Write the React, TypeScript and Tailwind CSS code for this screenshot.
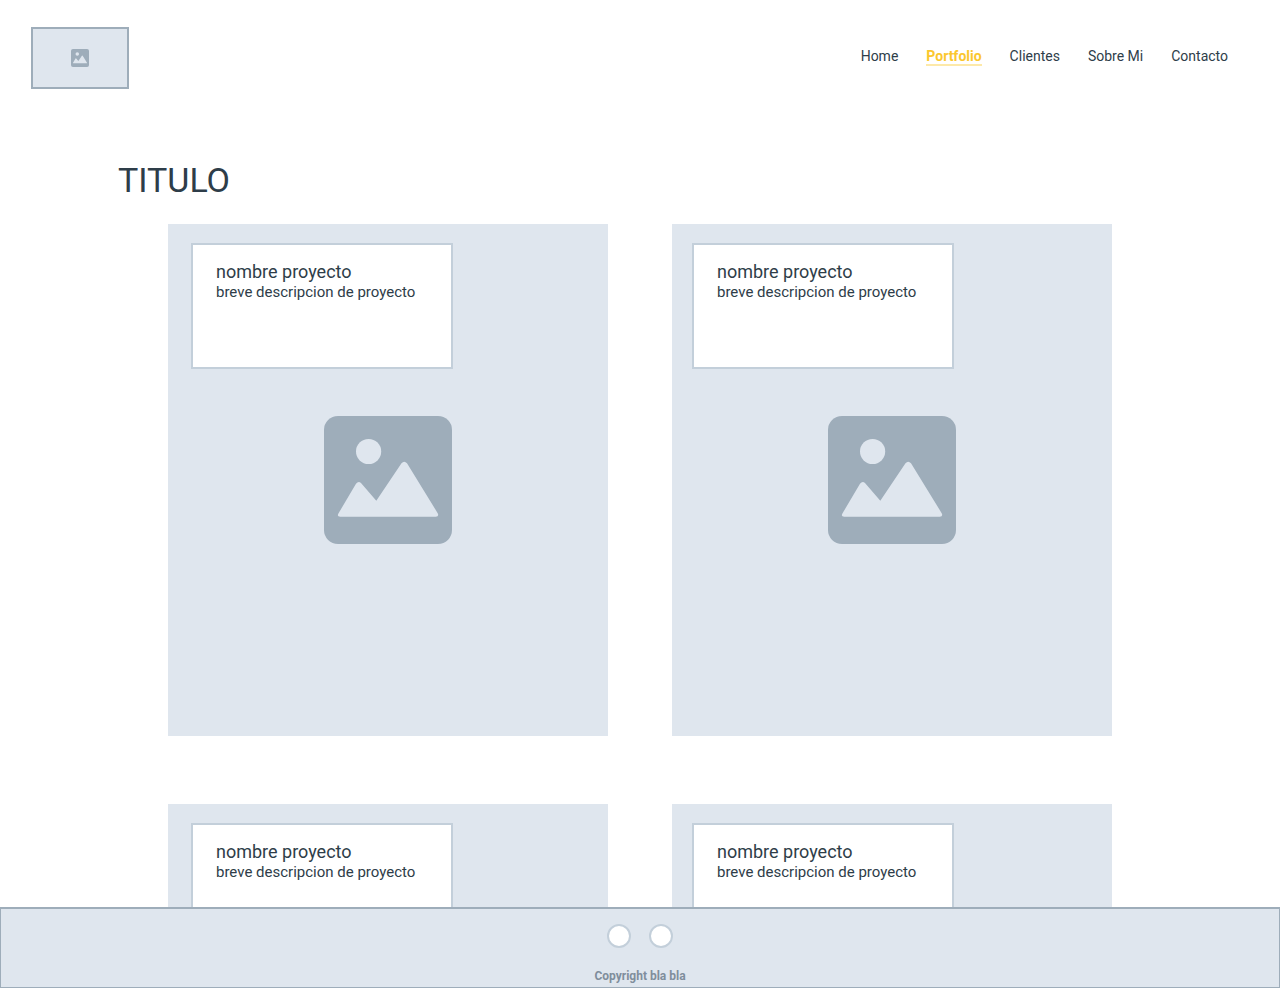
import React from "react";

const links = ["Home", "Portfolio", "Clientes", "Sobre Mi", "Contacto"];

const projects = [1, 2, 3, 4].map((id) => ({
  id,
  name: "nombre proyecto",
  description: "breve descripcion de proyecto",
}));

function Picture({ className }: { className: string }) {
  return (
    <svg viewBox="0 0 128 128" className={className} aria-hidden="true">
      <rect width="128" height="128" rx="14" fill="#9eadba" />
      <circle cx="44.6" cy="35.5" r="12.6" fill="#dfe6ee" />
      <path
        d="M14.4 97.5 L32 67.8 Q34.5 64.5 37.2 67.2 L52.3 84.7 L77.5 47.3 Q80.2 44 83 47.3 L113.7 97.2 Q115.3 100.5 111.8 100.8 H16.2 Q12.7 100.5 14.4 97.5Z"
        fill="#dfe6ee"
      />
    </svg>
  );
}

function Header() {
  return (
    <header className="flex items-start justify-between pt-[27px] pr-[52px] pl-[31px]">
      <a
        href="#home"
        aria-label="Home"
        className="flex h-[62px] w-[98px] items-center justify-center border-2 border-[#9eadba] bg-[#dfe6ee]"
      >
        <Picture className="size-[18px]" />
      </a>
      <nav className="flex gap-7 pt-[21px] text-[14px] leading-4">
        {links.map((label) => (
          <a
            key={label}
            href={"#" + label.toLowerCase().replace(" ", "-")}
            className={
              label === "Portfolio"
                ? "border-b-2 border-[#fde9a9] font-bold text-[#fbc72e]"
                : "border-b-2 border-transparent"
            }
          >
            {label}
          </a>
        ))}
      </nav>
    </header>
  );
}

function Footer() {
  return (
    <footer className="flex shrink-0 flex-col items-center border border-t-2 border-[#9eadba] bg-[#dfe6ee] pt-[15px] pb-[3px]">
      <div className="flex gap-[18px]">
        <a href="#social-1" aria-label="Social 1" className="size-6 rounded-full border-2 border-[#c3cfda] bg-white" />
        <a href="#social-2" aria-label="Social 2" className="size-6 rounded-full border-2 border-[#c3cfda] bg-white" />
      </div>
      <p className="mt-5 text-[12px] leading-4 font-bold text-[#7f8e9c]">Copyright bla bla</p>
    </footer>
  );
}

export default function App() {
  return (
    <div className="flex h-screen flex-col bg-white font-['Roboto',sans-serif] text-[#2e3d49]">
      <div className="min-h-0 flex-1 overflow-y-auto [scrollbar-width:none]">
        <Header />
        <main className="px-[118px] pt-[71px] pb-16">
          <h1 className="text-[34px] leading-10">TITULO</h1>
          <div className="mx-auto mt-6 grid max-w-[944px] grid-cols-2 gap-x-16 gap-y-[68px]">
            {projects.map((project) => (
              <article
                key={project.id}
                className="group grid min-h-[512px] bg-[#dfe6ee]"
              >
                <Picture className="col-start-1 row-start-1 size-32 place-self-center" />
                <div className="col-start-1 row-start-1 mt-[19px] h-[126px] w-[262px] border-2 border-[#c3cfda] bg-white px-[23px] pt-4 group-odd:ml-[23px] group-even:ml-5">
                  <h2 className="text-[18px] leading-[22px]">{project.name}</h2>
                  <p className="text-[15px] leading-[18px]">{project.description}</p>
                </div>
              </article>
            ))}
          </div>
        </main>
      </div>
      <Footer />
    </div>
  );
}
